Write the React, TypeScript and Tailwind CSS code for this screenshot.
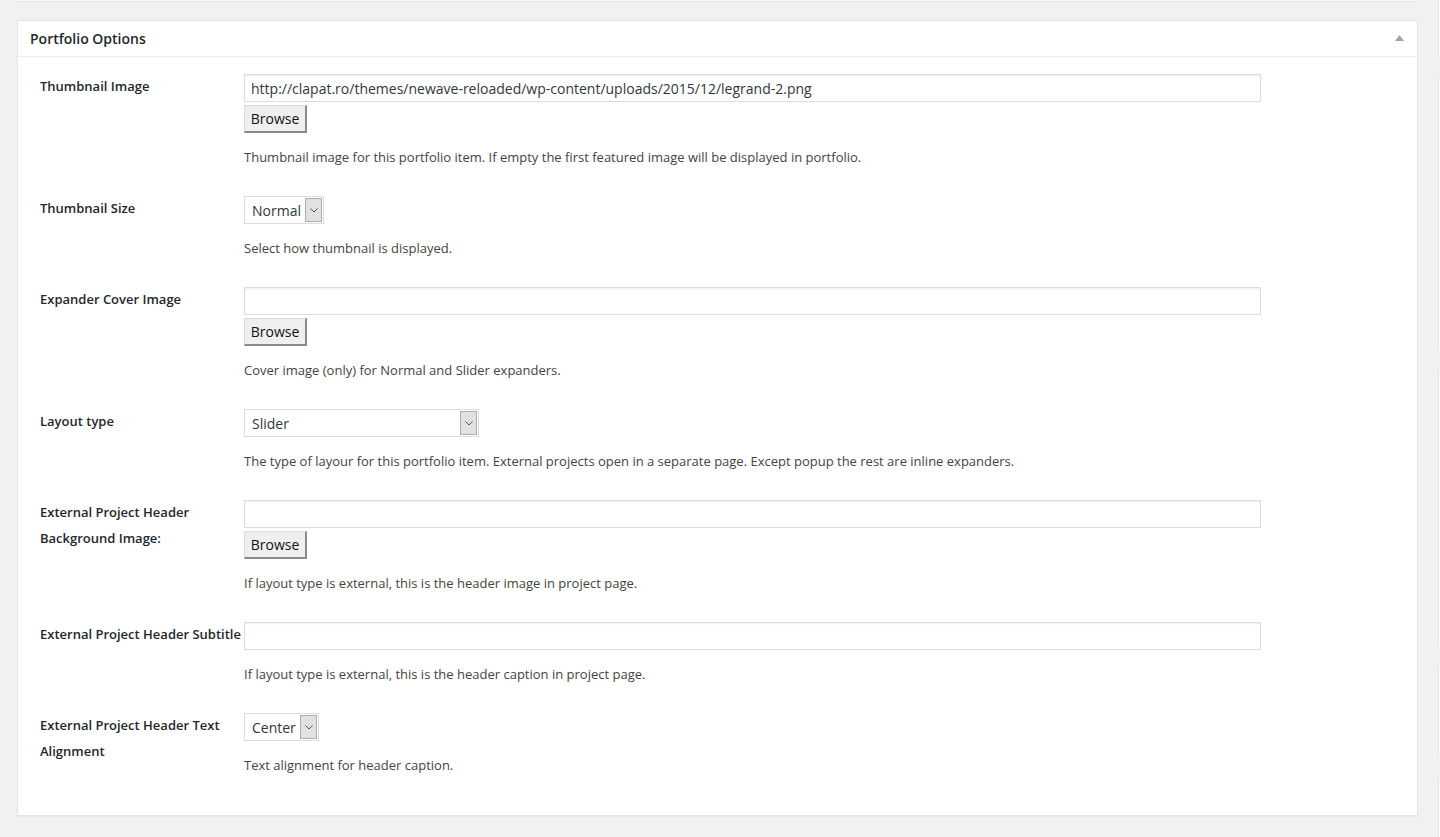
import React from "react";

type Field =
	| { kind: "upload"; label: string[]; value?: string; desc: string }
	| { kind: "text"; label: string[]; desc: string }
	| { kind: "select"; label: string[]; value: string; width: string; desc: string };

const fields: Field[] = [
	{
		kind: "upload",
		label: ["Thumbnail Image"],
		value: "http://clapat.ro/themes/newave-reloaded/wp-content/uploads/2015/12/legrand-2.png",
		desc: "Thumbnail image for this portfolio item. If empty the first featured image will be displayed in portfolio.",
	},
	{ kind: "select", label: ["Thumbnail Size"], value: "Normal", width: "w-[80px]", desc: "Select how thumbnail is displayed." },
	{ kind: "upload", label: ["Expander Cover Image"], desc: "Cover image (only) for Normal and Slider expanders." },
	{
		kind: "select",
		label: ["Layout type"],
		value: "Slider",
		width: "w-[235px]",
		desc: "The type of layour for this portfolio item. External projects open in a separate page. Except popup the rest are inline expanders.",
	},
	{
		kind: "upload",
		label: ["External Project Header", "Background Image:"],
		desc: "If layout type is external, this is the header image in project page.",
	},
	{ kind: "text", label: ["External Project Header Subtitle"], desc: "If layout type is external, this is the header caption in project page." },
	{
		kind: "select",
		label: ["External Project Header Text", "Alignment"],
		value: "Center",
		width: "w-[75px]",
		desc: "Text alignment for header caption.",
	},
];

const TextInput = ({ value }: { value?: string }) => (
	<div className="w-[1017px] h-[28px] border border-[#dddddd] bg-white shadow-[inset_0_1px_2px_rgba(0,0,0,0.07)] px-[6px] flex items-center text-[14px] text-[#32373c]">
		{value}
	</div>
);

const BrowseButton = () => (
	<div className="mt-[3px] w-[63px] h-[28px] bg-[#efefef] border-t border-l border-[#dcdcdc] border-r-2 border-b-2 border-r-[#8a8a8a] border-b-[#8a8a8a] flex items-center justify-center text-[14px] text-[#111]">
		Browse
	</div>
);

const Select = ({ value, width }: { value: string; width: string }) => (
	<div className={`${width} h-[28px] border border-[#dddddd] bg-white flex items-stretch text-[14px] text-[#32373c]`}>
		<div className="flex-1 flex items-center pl-[7px]">{value}</div>
		<div className="w-[17px] my-[1px] mr-[1px] bg-[#e1e1e1] border border-[#adadad] flex items-center justify-center">
			<svg width="8" height="5" viewBox="0 0 8 5">
				<polyline points="0.5,0.5 4,4 7.5,0.5" fill="none" stroke="#555" strokeWidth="1" />
			</svg>
		</div>
	</div>
);

const Row = ({ field }: { field: Field }) => (
	<div className="flex pt-[14px] pb-[15px]">
		<div className="w-[204px] shrink-0 text-[13px] leading-[26px] font-semibold text-[#23282d] -mt-[1px]">
			{field.label.map((l) => (
				<div key={l}>{l}</div>
			))}
		</div>
		<div className="flex flex-col items-start">
			{field.kind === "select" ? (
				<Select value={field.value} width={field.width} />
			) : (
				<>
					<TextInput value={field.kind === "upload" ? field.value : undefined} />
					{field.kind === "upload" && <BrowseButton />}
				</>
			)}
			<p className="mt-[14px] text-[13px] leading-[20px] text-[#444]">{field.desc}</p>
		</div>
	</div>
);

const sideBoxes = ["h-[58px]", "mt-[22px] h-[35px]", "h-[242px]", "mt-[20px] h-[280px]", "mt-[20px] h-[37px]", "h-[56px]", "mt-[22px] h-[60px]"];

const App = () => {
	return (
		<div className="w-[1440px] h-[837px] overflow-hidden bg-[#f1f1f1] flex font-['Open_Sans',sans-serif]">
			<div className="ml-[17px] w-[1401px] shrink-0 flex flex-col">
				<div className="h-[1px] bg-[#fafafa] shadow-[0_1px_1px_rgba(0,0,0,0.06)]" />
				<div className="mt-[19px] bg-white border border-[#e5e5e5] shadow-[0_1px_1px_rgba(0,0,0,0.04)]">
					<div className="h-[36px] border-b border-[#eeeeee] flex items-center justify-between pl-[12px] pr-[13px] pb-[1px]">
						<h2 className="text-[14px] font-semibold text-[#23282d]">Portfolio Options</h2>
						<svg width="9" height="6" viewBox="0 0 9 6">
							<polygon points="4.5,0 9,6 0,6" fill="#a0a5aa" />
						</svg>
					</div>
					<div className="pl-[22px] pt-[3px] pb-[25px]">
						{fields.map((f) => (
							<Row key={f.label.join(" ")} field={f} />
						))}
					</div>
				</div>
			</div>
			<div className="ml-[20px] flex-1 flex flex-col">
				{sideBoxes.map((c, i) => (
					<div key={i} className={`${c} bg-white border-l border-t border-[#e5e5e5]`} />
				))}
			</div>
		</div>
	);
};

export default App;
